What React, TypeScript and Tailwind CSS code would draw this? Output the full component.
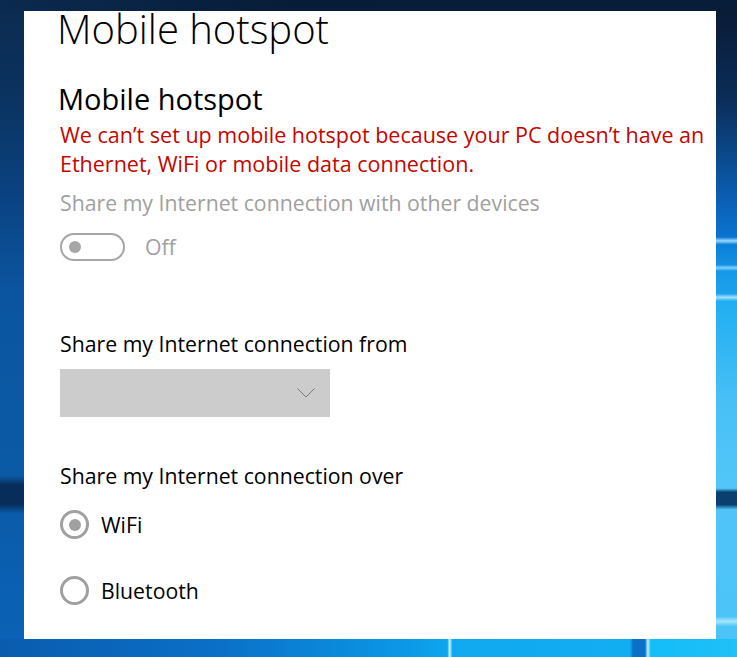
const RADIOS = [
  { label: 'WiFi', checked: true },
  { label: 'Bluetooth', checked: false },
];

export default function App() {
  return (
    <div className="flex h-[657px] w-[737px] flex-col overflow-hidden font-['Open_Sans','Noto_Sans',sans-serif]">
      {/* desktop wallpaper, top edge */}
      <div className="h-[11px] shrink-0 bg-[linear-gradient(90deg,#0b2a4f_0%,#071c38_40%,#081d3a_100%)]" />

      <div className="flex h-[628px] shrink-0">
        <div className="w-[24px] shrink-0 bg-[linear-gradient(180deg,#0c2b50_0%,#0a3462_15%,#0a4383_30%,#0b55a0_45%,#0b5aa6_74%,#072d5a_75.5%,#072d5a_78.5%,#0b5caa_80%,#0a62b6_100%)]" />

        <main className="w-[692px] shrink-0 bg-white pl-[36px] text-black">
          <h1 className="-ml-[3px] text-[40px] font-light leading-[35px]">Mobile hotspot</h1>
          <h2 className="-ml-[2px] mt-[36px] text-[29px] font-normal leading-[34px]">Mobile hotspot</h2>
          <p className="mt-[4px] text-[21.5px] leading-[29px] text-[#c50500]">
            We can’t set up mobile hotspot because your PC doesn’t have an
            <br />
            Ethernet, WiFi or mobile data connection.
          </p>
          <p className="mt-[10px] text-[21.25px] leading-[29px] text-[#a0a0a0]">
            Share my Internet connection with other devices
          </p>

          <div className="mt-[16px] flex items-center gap-[20px]">
            <div className="flex h-[28px] w-[65px] items-center rounded-full border-[2.5px] border-[#a6a6a6] pl-[7px]">
              <div className="h-[12px] w-[12px] rounded-full bg-[#a6a6a6]" />
            </div>
            <span className="text-[21.25px] leading-[28px] text-[#a0a0a0]">Off</span>
          </div>

          <p className="mt-[68px] text-[21.25px] leading-[29px]">Share my Internet connection from</p>
          <div className="mt-[11px] flex h-[48px] w-[270px] items-center justify-end bg-[#cccccc] pr-[15px]">
            <svg width="18" height="10" viewBox="0 0 18 10" fill="none" stroke="#7a7a7a" strokeWidth="1">
              <polyline points="0.5,0.5 9,9 17.5,0.5" />
            </svg>
          </div>

          <p className="mt-[44px] text-[21.25px] leading-[29px]">Share my Internet connection over</p>
          <div className="mt-[20px] flex flex-col gap-[37px]">
            {RADIOS.map((r) => (
              <div key={r.label} className="flex items-center gap-[12px]">
                <div className="flex h-[29px] w-[29px] items-center justify-center rounded-full border-[3px] border-[#a0a0a0]">
                  {r.checked && <div className="h-[12px] w-[12px] rounded-full bg-[#a0a0a0]" />}
                </div>
                <span className="text-[21.25px] leading-[29px]">{r.label}</span>
              </div>
            ))}
          </div>
        </main>

        <div className="w-[21px] shrink-0 bg-[linear-gradient(180deg,#0a1b36_0%,#0b2d58_14%,#0a5fb4_30%,#0a74d0_36%,#9ad9ff_36.6%,#0b80da_37.2%,#1690e2_40.4%,#7fd0ff_40.9%,#1698e6_41.4%,#1ca2ec_45%,#a0e0ff_45.6%,#20aef2_46.2%,#48c0f6_62%,#52c6f8_76%,#0a4070_76.6%,#0a4070_78.6%,#50c4f8_79.4%,#4cc4f8_96.4%,#a8e6ff_97.2%,#4cc4f8_98%,#4cc4f8_100%)]" />
      </div>

      {/* desktop wallpaper, bottom edge */}
      <div className="h-[18px] shrink-0 bg-[linear-gradient(90deg,#0a5cae_0%,#0a70c8_30%,#0b98e6_55%,#0ea6ef_60.7%,#d0f0ff_61%,#10a8f0_61.4%,#12aef2_85.5%,#0a6fc6_85.9%,#0a6fc6_87.5%,#c8ecff_87.9%,#12bdf8_88.3%,#20c0f8_100%)]" />
    </div>
  );
}
